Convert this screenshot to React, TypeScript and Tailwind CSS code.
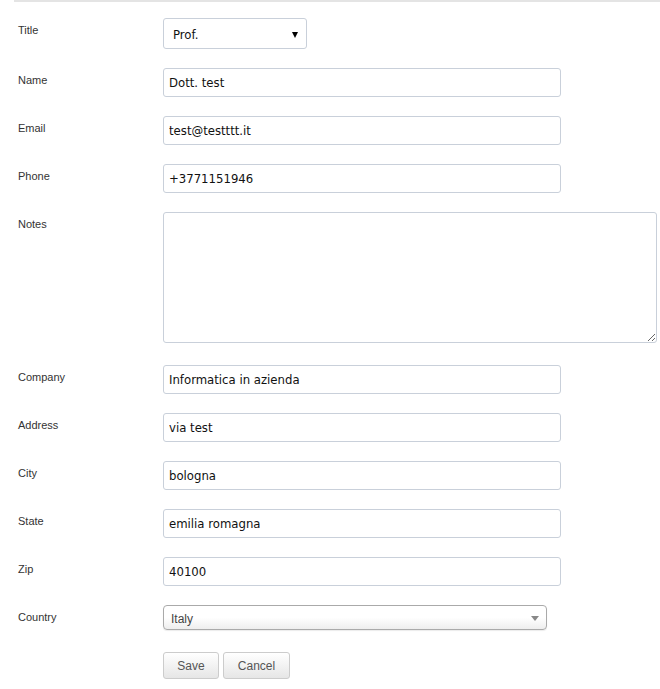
import React from "react";

const labelCls =
  "w-[145px] shrink-0 pt-[4px] text-[11px] leading-[16px] text-[#333] font-['Liberation_Sans',Arial,sans-serif]";
const inputCls =
  "h-[29px] w-[398px] rounded-[3px] border border-[#c9d0da] bg-white px-[5px] text-[13px] text-[#111] font-['DejaVu_Sans_Condensed','DejaVu_Sans',sans-serif] outline-none";

const Row = ({
  label,
  children,
  className = "mb-[19px]",
}: {
  label: string;
  children: React.ReactNode;
  className?: string;
}) => (
  <div className={"flex items-start " + className}>
    <div className={labelCls}>{label}</div>
    {children}
  </div>
);

const TextRow = ({ label, value }: { label: string; value: string }) => (
  <Row label={label}>
    <input className={inputCls} defaultValue={value} />
  </Row>
);

export default function App() {
  return (
    <div className="min-h-[689px] w-[660px] bg-white">
      <div className="ml-[14px] border-t-[2px] border-[#e4e4e4] pl-[4px] pt-[16px]">
        <Row label="Title">
          <div className="relative h-[31px] w-[144px] rounded-[3px] border border-[#c9d0da] bg-white">
            <span className="absolute left-[9px] top-[6px] text-[13px] text-[#111] font-['DejaVu_Sans_Condensed','DejaVu_Sans',sans-serif]">
              Prof.
            </span>
            <span className="absolute right-[8px] top-[13px] h-0 w-0 border-x-[3.5px] border-t-[6px] border-x-transparent border-t-black" />
          </div>
        </Row>
        <TextRow label="Name" value="Dott. test" />
        <TextRow label="Email" value="test@testttt.it" />
        <TextRow label="Phone" value="+3771151946" />
        <Row label="Notes" className="mb-[22px]">
          <textarea className="block h-[131px] w-[494px] rounded-[3px] border border-[#c9d0da] bg-white outline-none" />
        </Row>
        <TextRow label="Company" value="Informatica in azienda" />
        <TextRow label="Address" value="via test" />
        <TextRow label="City" value="bologna" />
        <TextRow label="State" value="emilia romagna" />
        <TextRow label="Zip" value="40100" />
        <Row label="Country" className="mb-[22px]">
          <div className="relative h-[25px] w-[384px] rounded-[4px] border border-[#aaa] bg-gradient-to-b from-white from-50% to-[#eeeeee] shadow-[0_1px_1px_rgba(0,0,0,0.08)]">
            <span className="absolute left-[7px] top-[4px] text-[12px] text-[#444] font-['Liberation_Sans',Arial,sans-serif]">
              Italy
            </span>
            <span className="absolute right-[7px] top-[10px] h-0 w-0 border-x-[4px] border-t-[5px] border-x-transparent border-t-[#888]" />
          </div>
        </Row>
        <div className="flex gap-[4px] pl-[145px]">
          <button className="h-[27px] w-[56px] rounded-[3px] border border-[#ccc] bg-gradient-to-b from-white to-[#e6e6e6] text-[12px] text-[#555] font-['Liberation_Sans',Arial,sans-serif]">
            Save
          </button>
          <button className="h-[27px] w-[67px] rounded-[3px] border border-[#ccc] bg-gradient-to-b from-white to-[#e6e6e6] text-[12px] text-[#555] font-['Liberation_Sans',Arial,sans-serif]">
            Cancel
          </button>
        </div>
      </div>
    </div>
  );
}
